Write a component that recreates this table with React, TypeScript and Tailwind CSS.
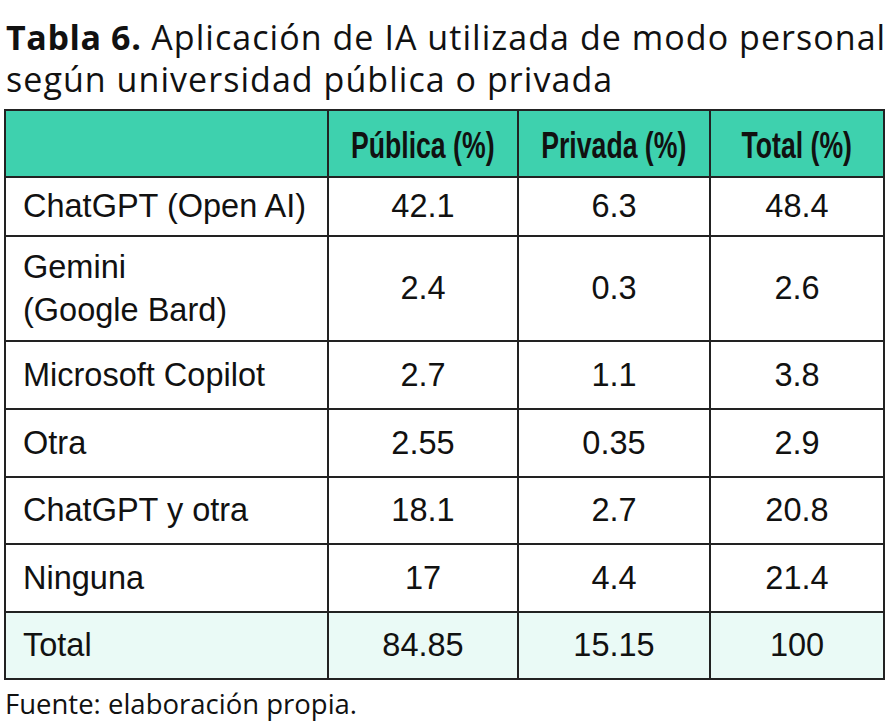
import React from "react";

const rows: { label: React.ReactNode; a: string; b: string; c: string; h: string }[] = [
  { label: "ChatGPT (Open AI)", a: "42.1", b: "6.3", c: "48.4", h: "h-[59px]" },
  {
    label: (
      <span className="block leading-[43px]">
        Gemini
        <br />
        (Google Bard)
      </span>
    ),
    a: "2.4",
    b: "0.3",
    c: "2.6",
    h: "h-[105px]",
  },
  { label: "Microsoft Copilot", a: "2.7", b: "1.1", c: "3.8", h: "h-[68px]" },
  { label: "Otra", a: "2.55", b: "0.35", c: "2.9", h: "h-[68px]" },
  { label: "ChatGPT y otra", a: "18.1", b: "2.7", c: "20.8", h: "h-[67px]" },
  { label: "Ninguna", a: "17", b: "4.4", c: "21.4", h: "h-[68px]" },
];

export default function App() {
  const body = "font-['Liberation_Sans',Arial,sans-serif] text-[32.5px] text-[#111]";
  const cell = "border-r-2 border-b-2 border-[#222] flex items-center";
  return (
    <div className="w-[892px] h-[723px] bg-white overflow-hidden">
      <div className="pl-[6px] pt-[16px] font-['Open_Sans',sans-serif] text-[34px] leading-[42px] text-[#111] tracking-[1.05px]">
        <div className="whitespace-nowrap">
          <span className="font-bold tracking-[0.6px]">Tabla 6.</span> Aplicación de IA utilizada de modo personal
        </div>
        <div className="whitespace-nowrap">según universidad pública o privada</div>
      </div>
      <div className="ml-[4px] mt-[9px] w-[881px] border-l-2 border-t-2 border-[#222] grid grid-cols-[323px_190px_192px_174px]">
        <div className={`${cell} h-[67px] bg-[#3ed1ae]`} />
        {["Pública (%)", "Privada (%)", "Total (%)"].map((t) => (
          <div key={t} className={`${cell} h-[67px] bg-[#3ed1ae] justify-center pt-[5px]`}>
            <span className="inline-block whitespace-nowrap scale-x-[0.72] font-['Liberation_Sans',Arial,sans-serif] font-bold text-[37px] leading-[40px] text-[#111]">
              {t}
            </span>
          </div>
        ))}
        {rows.map((r, i) => (
          <React.Fragment key={i}>
            <div className={`${cell} ${r.h} ${body} pl-[17px]`}>{r.label}</div>
            <div className={`${cell} ${r.h} ${body} justify-center`}>{r.a}</div>
            <div className={`${cell} ${r.h} ${body} justify-center`}>{r.b}</div>
            <div className={`${cell} ${r.h} ${body} justify-center`}>{r.c}</div>
          </React.Fragment>
        ))}
        <div className={`${cell} h-[67px] bg-[#eafaf6] ${body} pl-[17px]`}>Total</div>
        <div className={`${cell} h-[67px] bg-[#eafaf6] ${body} justify-center`}>84.85</div>
        <div className={`${cell} h-[67px] bg-[#eafaf6] ${body} justify-center`}>15.15</div>
        <div className={`${cell} h-[67px] bg-[#eafaf6] ${body} justify-center`}>100</div>
      </div>
      <div className="pl-[5px] mt-[4px] font-['Open_Sans',sans-serif] text-[27.5px] leading-[40px] text-[#111]">
        Fuente: elaboración propia.
      </div>
    </div>
  );
}
